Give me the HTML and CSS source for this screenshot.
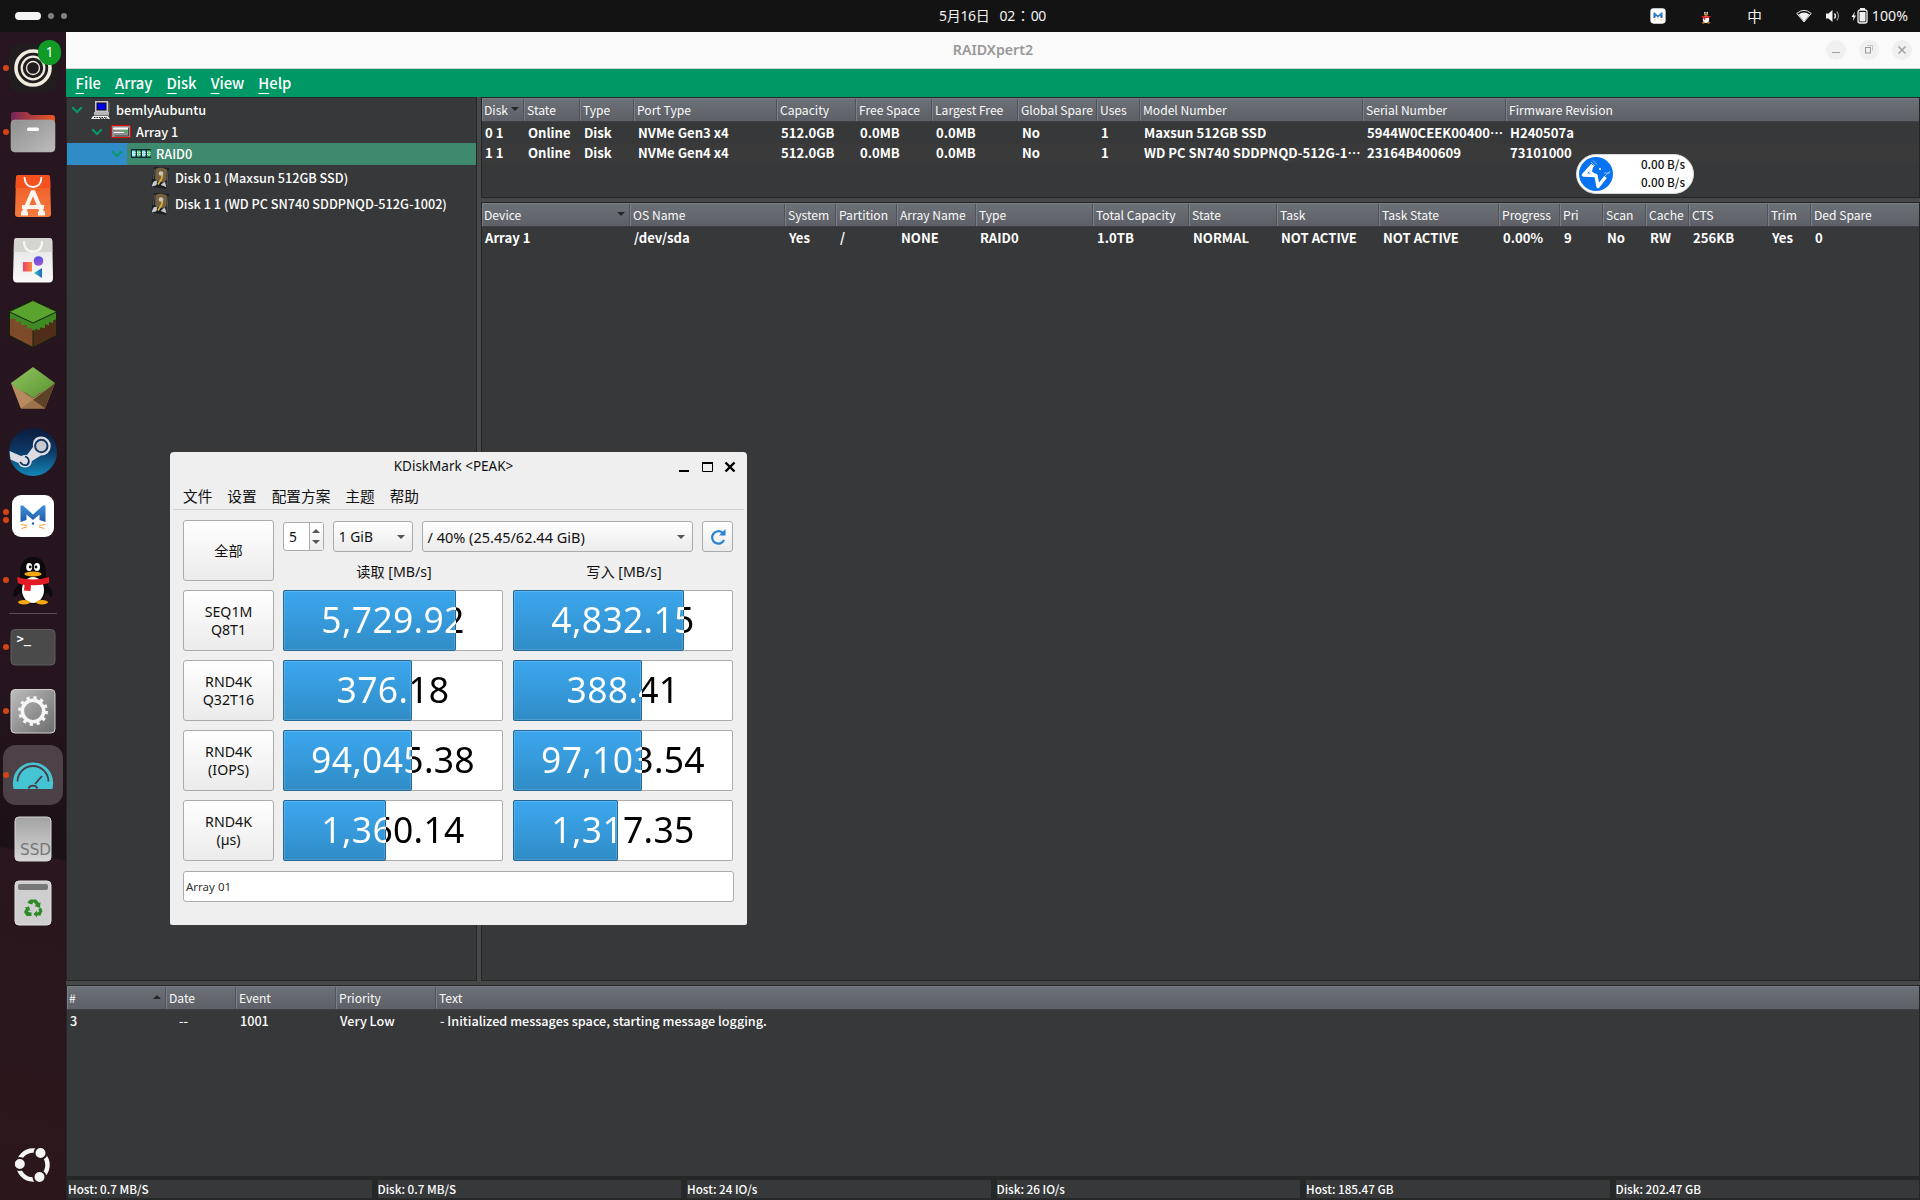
FILE: index.html
```html
<!DOCTYPE html>
<html lang="zh-CN">
<head>
<meta charset="utf-8">
<title>RAIDXpert2</title>
<link rel="stylesheet" href="styles.css">
</head>
<body>
<svg class="defs" width="0" height="0">
  <defs>
    <linearGradient id="silver" x1="0" y1="0" x2="0" y2="1"><stop offset="0" stop-color="#a3a3a3"/><stop offset="1" stop-color="#d6d6d6"/></linearGradient>
    <linearGradient id="silver2" x1="0" y1="0" x2="1" y2="1"><stop offset="0" stop-color="#8f8f8f"/><stop offset="1" stop-color="#bcbcbc"/></linearGradient>
    <linearGradient id="silver3" x1="0" y1="0" x2="1" y2="1"><stop offset="0" stop-color="#bdbdbd"/><stop offset="1" stop-color="#6c6c6c"/></linearGradient>
    <linearGradient id="folder" x1="0" y1="0" x2="1" y2="0"><stop offset="0" stop-color="#77255a"/><stop offset="1" stop-color="#ea5a20"/></linearGradient>
    <linearGradient id="steam" x1="0" y1="0" x2="0" y2="1"><stop offset="0" stop-color="#0c1a3c"/><stop offset=".5" stop-color="#0d3a68"/><stop offset="1" stop-color="#1387b8"/></linearGradient>
    <linearGradient id="bluem" x1="0" y1="0" x2="0" y2="1"><stop offset="0" stop-color="#3d8fd8"/><stop offset="1" stop-color="#1f5aa8"/></linearGradient>
    <linearGradient id="pinkor" x1="0" y1="0" x2="1" y2="0"><stop offset="0" stop-color="#ee3f6a"/><stop offset="1" stop-color="#f78a3e"/></linearGradient>
    <linearGradient id="purp" x1="0" y1="0" x2="0" y2="1"><stop offset="0" stop-color="#5550e0"/><stop offset="1" stop-color="#a255d0"/></linearGradient>
    <linearGradient id="teal" x1="0" y1="0" x2="1" y2="0"><stop offset="0" stop-color="#29c8b0"/><stop offset="1" stop-color="#2463c8"/></linearGradient>
    <linearGradient id="bagw" x1="0" y1="0" x2="0" y2="1"><stop offset="0" stop-color="#e2e2e2"/><stop offset="1" stop-color="#fafafa"/></linearGradient>
    <linearGradient id="bago" x1="0" y1="0" x2="0" y2="1"><stop offset="0" stop-color="#ee5a24"/><stop offset="1" stop-color="#f57a3f"/></linearGradient>
    <linearGradient id="grass" x1="0" y1="0" x2="1" y2="1"><stop offset="0" stop-color="#90c060"/><stop offset=".6" stop-color="#6fa843"/><stop offset="1" stop-color="#5c8a38"/></linearGradient>
    <symbol id="chev" viewBox="0 0 12 12"><path d="M1.2 3.2 6 8 10.8 3.2" fill="none" stroke="#079a68" stroke-width="2"/></symbol>
    <symbol id="hdd" viewBox="0 0 20 24">
      <path d="M4 1 19 2 18 17 16 23 1 20.500Z" fill="#1d2023"/>
      <path d="M5.500 3Q11 .5 17 3.500L16.500 14Q11 19 5 13Z" fill="#76603f"/>
      <path d="M4.500 3 3.500 13M18 4.500 17 19" stroke="#555a60"/>
      <circle cx="11" cy="7.500" r="2.300" fill="#c9c5bb"/>
      <path d="M12.500 9 11.500 13 8 18.500" fill="none" stroke="#d7b53d" stroke-width="1.700"/>
      <path d="M2 20 4 15.500 7 15 6 19ZM11 19 14.500 16 16 21" fill="#c5cbd1" stroke="#c5cbd1" stroke-width=".8"/>
    </symbol>
    <symbol id="qq" viewBox="0 0 42 50">
      <path d="M6 30Q0 36 2 42 4 42 7 38L35 38Q38 42 40 42 42 36 36 30L34 22Q35 2 21 2 7 2 8 22Z" fill="#0b0b0d"/>
      <ellipse cx="21" cy="35" rx="13" ry="14" fill="#0b0b0d"/>
      <ellipse cx="21" cy="35" rx="11" ry="13" fill="#fff"/>
      <ellipse cx="12" cy="47.200" rx="6" ry="2.200" fill="#f5a80f"/><ellipse cx="30" cy="47.200" rx="6" ry="2.200" fill="#f5a80f"/>
      <ellipse cx="17.200" cy="12" rx="3" ry="4" fill="#fff"/><ellipse cx="25" cy="12" rx="3" ry="4" fill="#fff"/>
      <circle cx="18.200" cy="12" r="1.400" fill="#111"/><circle cx="24" cy="12" r="1.400" fill="#111"/>
      <ellipse cx="21" cy="19" rx="8.600" ry="2.500" fill="#f5a80f"/>
      <path d="M5 22Q21 27 37 22L37 28Q27 31 19 30L18.500 36 12 35.500 12.500 30Q7 29 6 28Z" fill="#e21b24"/>
    </symbol>
    <symbol id="catm" viewBox="0 0 44 44">
      <rect x="1" y="1" width="42" height="42" rx="9" fill="#fff"/>
      <path d="M9.500 28V11.500L12 11.500 22 20.500 32 11.500 34.500 11.500V28L28.500 26V20.500L22 26 15.500 20.500V26Z" fill="url(#bluem)"/>
      <circle cx="22" cy="29.500" r="1.200" fill="#2a65ad"/>
      <path d="M10 30.500 16 31.500M10.500 34.500 16 33M34 30.500 28 31.500M33.500 34.500 28 33" stroke="#f0a63c" stroke-width="1.200"/>
    </symbol>
  </defs>
</svg>

<header class="topbar">
  <div class="workspaces"><i class="pill"></i><i class="dot"></i><i class="dot"></i></div>
  <div class="clock"><span>5月16日</span><span>02<b>：</b>00</span></div>
  <div class="tray">
    <svg class="t-cat" width="16" height="16"><use href="#catm"/></svg>
    <svg class="t-qq" width="12" height="15"><use href="#qq"/></svg>
    <span class="t-zh">中</span>
    <svg class="t-wifi" width="16" height="14" viewBox="0 0 16 14"><path d="M.8 4.500Q8-1.800 15.200 4.500L8 13Z" fill="none" stroke="#eee"/><path d="M2.500 5.500Q8 1.500 13.500 5.500L8 12.500Z" fill="#f2f2f2"/></svg>
    <svg class="t-vol" width="16" height="14" viewBox="0 0 16 14"><path d="M1 4.500H3.500L7.500 1V13L3.500 9.500H1Z" fill="#f2f2f2"/><path d="M9.500 4.500Q11.500 7 9.500 9.500" fill="none" stroke="#eee" stroke-width="1.300"/><path d="M11.800 2.500Q15.200 7 11.800 11.500" fill="none" stroke="#8a8a8a" stroke-width="1.300"/></svg>
    <svg class="t-bat" width="17" height="16" viewBox="0 0 17 16"><path d="M4 3.500 .5 9H2.500L2 13 5 7.500H3Z" fill="#f2f2f2"/><rect x="7" y="2" width="9" height="13" rx="2" fill="none" stroke="#f2f2f2" stroke-width="1.300"/><rect x="9" y="0" width="5" height="2" fill="#f2f2f2"/><rect x="8.500" y="4" width="6" height="9.500" fill="#f2f2f2"/></svg>
    <span class="pct">100%</span>
  </div>
</header>

<div class="desk">
  <nav class="dock">
    <div class="app run1"><svg width="48" height="48" viewBox="0 0 48 48"><rect width="48" height="48" rx="10" fill="#1f1d1d"/><g fill="none" stroke="#f1ecdf"><circle cx="24" cy="24" r="17" stroke-width="3.600"/><circle cx="24" cy="24" r="11.300" stroke-width="2.200"/><circle cx="24" cy="24" r="6.500" stroke-width="1.300"/></g></svg><span class="badge">1</span></div>
    <div class="app run1"><svg width="48" height="48" viewBox="0 0 48 48"><path d="M2 12V7Q2 4 5 4H18L22 7H43Q46 7 46 10V16H2Z" fill="url(#folder)"/><rect x="2" y="12" width="44" height="32" rx="4" fill="url(#silver2)" stroke="#aaa" stroke-width=".6"/><rect x="18" y="19.500" width="12" height="3.500" rx="1.500" fill="#fff"/></svg></div>
    <div class="app"><svg width="48" height="48" viewBox="0 0 48 48"><path d="M9 3H39Q41 3 41 5L42 42Q42 45 39 45H9Q6 45 6 42L7 5Q7 3 9 3Z" fill="url(#bago)"/><path d="M7 4.500 9 3H39L41 4.500 41.500 16H6.500Z" fill="#f4511e"/><path d="M15.500 5Q16 15 24 15T32.500 5" fill="none" stroke="#fff" stroke-width="1.800"/><path d="M14.500 41.500 24 19 33.500 41.500M19 41.500H12M36 41.500H29M13 35H35" fill="none" stroke="#fff4ee" stroke-width="4.200" stroke-linejoin="bevel"/></svg></div>
    <div class="app"><svg width="48" height="48" viewBox="0 0 48 48"><path d="M8 2H40Q43 2 43.300 5L44 42Q44 46.500 40 46.500H8Q4 46.500 4 42L5 5Q5 2 8 2Z" fill="url(#bagw)"/><path d="M5 5Q5 2 8 2H40Q43 2 43.300 5V16H4.800Z" fill="#d4d4d0"/><path d="M15 5Q15 15.500 24 15.500T33 5" fill="none" stroke="#f8f8f8" stroke-width="2"/><rect x="14" y="26" width="9" height="9.500" fill="url(#pinkor)"/><circle cx="29.500" cy="25" r="4.800" fill="url(#purp)"/><path d="M25 37 33 32V42Z" fill="url(#teal)"/></svg></div>
    <div class="app"><svg width="48" height="48" viewBox="0 0 48 48"><path d="M.5 12 24 24V47.500L.5 35.500Z" fill="#7d4a2a"/><path d="M47.500 12 24 24V47.500L47.500 35.500Z" fill="#4f2d18"/><path d="M.5 11.500 24 .5 47.500 11.500V19L44 20.500V23L40 22V25.500L36 24V28L31 27.500V30L26 29V30.500H23.500L22 28 18 28.500V25L12 25V21.500L7 22V19L.5 19Z" fill="#3f8a22"/><path d="M.5 11.500 24 .5 47.500 11.500 24 22.500Z" fill="#5ba32f"/><path d="M.5 11.500 24 .5 47.500 11.500V35.500L24 47.500 .5 35.500ZM.5 12 24 23 47.500 12M24 30V47.500" fill="none" stroke="#15240c" stroke-width="1"/></svg></div>
    <div class="app"><svg width="48" height="48" viewBox="0 0 48 48"><path d="M2 19 12 44.500H36L46 19 24 34Z" fill="#a77c52"/><path d="M2 19 24 36 12 44.500Z" fill="#b78a5f"/><path d="M24 36 36 44.500 46 19Z" fill="#5d4227"/><path d="M24 36 12 44.500H36Z" fill="#9b744b"/><path d="M24 3 46 19 37 26 31 29 24 34 17 29 8 25 2 19Z" fill="url(#grass)"/></svg></div>
    <div class="app"><svg width="48" height="48" viewBox="0 0 48 48"><circle cx="24" cy="24" r="24" fill="url(#steam)"/><path d="M.5 23 12 28Q15 26.500 18 27L24 19Q23 8.500 32.500 8.500A9.500 9.500 0 0 1 32 27.500L23 33Q22 39 16.500 39.500 11 39.500 9.500 35L1.500 31.500Z" fill="#dcdce2"/><circle cx="32.300" cy="18" r="6.200" fill="#c8c8d0" stroke="#12365f" stroke-width="2"/><path d="M11 34Q14 38 18 37A4.800 4.800 0 0 0 16 28.500" fill="none" stroke="#12365f" stroke-width="1.700"/></svg></div>
    <div class="app run2"><svg width="44" height="44"><use href="#catm"/></svg></div>
    <div class="app run1"><svg width="42" height="50"><use href="#qq"/></svg></div>
    <hr class="sep">
    <div class="app run1"><svg width="48" height="48" viewBox="0 0 48 48"><rect x="2" y="6.500" width="44" height="35.500" rx="4" fill="#4a4a4a" stroke="#5e5e5e"/><text x="7.500" y="20" font-family="DejaVu Sans Mono" font-weight="bold" font-size="12" fill="#fff">&gt;_</text></svg></div>
    <div class="app run1"><svg width="48" height="48" viewBox="0 0 48 48"><rect x="2" y="2.500" width="44" height="43.500" rx="4" fill="url(#silver3)" stroke="#d0d0d0" stroke-width="1"/><circle cx="24" cy="24" r="10.700" fill="none" stroke="#f5f5f3" stroke-width="3.600"/><circle cx="24" cy="24" r="13.200" fill="none" stroke="#f5f5f3" stroke-width="3.400" stroke-dasharray="3.200 3.712"/></svg></div>
    <div class="app run1 active"><svg width="48" height="48" viewBox="0 0 48 48"><path d="M4.500 38Q3 32 4.500 27A20 20 0 0 1 43.500 27Q45 32 43.500 38Z" fill="#45c5d3"/><path d="M8.500 30.500A15.500 15.500 0 0 1 39.500 30.500M33 25 26 33M19.500 37.500A5 5 0 0 1 28.500 37.500" fill="none" stroke="#4c3a44" stroke-width="1.800"/></svg></div>
    <div class="app"><svg width="48" height="48" viewBox="0 0 48 48"><rect x="6" y="2" width="36" height="44" rx="4" fill="url(#silver)" stroke="#d5d5d5"/><text x="11" y="40.300" font-family="DejaVu Sans" font-size="15.200" fill="#777">SSD</text></svg></div>
    <div class="app"><svg width="48" height="48" viewBox="0 0 48 48"><rect x="6" y="2" width="36" height="44" rx="4" fill="#cfcfcf" stroke="#e2e2e2"/><rect x="9" y="5" width="30" height="6" rx="2" fill="#777"/><g fill="#2d8a26"><path d="M19.500 22 21.500 20.500H27L30 24 31.500 23 31 29 25.500 27 27 26 24.500 23 23 25.500 18.500 24Z"/><path d="M32 28.500 33.500 32 31.500 36.500H28V38.500L24.500 35 28 31.500V33.500L30 33 29.500 30Z"/><path d="M22.500 33.500V37H17.500L15 33 17 29.500 15.500 28.500 20 27.500 21.500 32 20 31 19 33Z"/></g></svg></div>
    <div class="app launcher"><svg width="36" height="36" viewBox="0 0 36 36"><circle cx="18" cy="18" r="14.500" fill="none" stroke="#f6f6f6" stroke-width="4.500"/><g fill="#f4f4f4" stroke="#29171b" stroke-width="2"><circle cx="4.800" cy="17" r="6"/><circle cx="25.500" cy="6" r="6"/><circle cx="24.500" cy="30" r="6"/></g></svg></div>
  </nav>

  <main class="window">
    <div class="titlebar"><span class="title">RAIDXpert2</span>
      <div class="winbtns">
        <i><svg width="20" height="20"><path d="M6 12.500H14" stroke="#a2a2a2"/></svg></i>
        <i><svg width="20" height="20"><rect x="6.500" y="7.500" width="5" height="5.500" fill="none" stroke="#999"/><path d="M8.500 5.500H13.500V10.500" fill="none" stroke="#c4c4c4"/></svg></i>
        <i><svg width="20" height="20"><path d="M6.500 6.500 13.500 13.500M13.500 6.500 6.500 13.500" stroke="#a2a2a2" stroke-width="1.500"/></svg></i>
      </div>
    </div>
    <div class="menubar"><span><u>F</u>ile</span><span><u>A</u>rray</span><span><u>D</u>isk</span><span><u>V</u>iew</span><span><u>H</u>elp</span></div>

    <div class="upper">
      <div class="panel tree">
        <div class="node l0"><svg class="chev" width="12" height="12"><use href="#chev"/></svg>
          <svg width="20" height="20" viewBox="0 0 20 20"><path d="M4 1H17V12H4Z" fill="#c8c8c8"/><path d="M17 1 18.500 3V14L17 12Z" fill="#666"/><rect x="6" y="3" width="9" height="7" fill="#0000e8" stroke="#111"/><path d="M3 12H18V15.500H3Z" fill="#b5b5b5"/><path d="M2 16H17L19 19H0Z" fill="#eee"/><path d="M3 17.500H16M9 18.800H17" stroke="#222" stroke-dasharray="1.500 1"/></svg>
          <span>bemlyAubuntu</span></div>
        <div class="node l1"><svg class="chev" width="12" height="12"><use href="#chev"/></svg>
          <svg width="20" height="20" viewBox="0 0 20 20"><rect x=".5" y="3.500" width="19" height="12" rx="1" fill="#8f8f8f" stroke="#f00000"/><path d="M2.500 6H17V7H2.500ZM2.500 10.500H13" fill="#fff" stroke="#fff"/><path d="M12 9H15.500V10.500" stroke="#00d820" fill="none"/><path d="M17.500 6V14H4" stroke="#444" fill="none"/></svg>
          <span>Array 1</span></div>
        <div class="node l2 selected"><svg class="chev" width="12" height="12"><use href="#chev"/></svg>
          <svg width="20" height="20" viewBox="0 0 20 20"><rect y="5" width="20" height="9" fill="#122c30"/><path d="M1 6.500H4.500V12.500H1ZM11 6.500H14.500V12.500H11Z" fill="#8fe8ee"/><path d="M6 6.500H9.500V12.500H6ZM16 6.500H19.500V12.500H16Z" fill="#5fd88a"/><path d="M1 8.500H20M1 10.500H20" stroke="#fff" stroke-dasharray="1 1.500"/></svg>
          <span>RAID0</span></div>
        <div class="node disk"><svg width="20" height="24"><use href="#hdd"/></svg><span>Disk 0 1 (Maxsun 512GB SSD)</span></div>
        <div class="node disk"><svg width="20" height="24"><use href="#hdd"/></svg><span>Disk 1 1 (WD PC SN740 SDDPNQD-512G-1002)</span></div>
      </div>

      <div class="right">
        <div class="panel disks">
          <div class="row head"><span class="sort down">Disk</span><span>State</span><span>Type</span><span>Port Type</span><span>Capacity</span><span>Free Space</span><span>Largest Free</span><span>Global Spare</span><span>Uses</span><span>Model Number</span><span>Serial Number</span><span>Firmware Revision</span></div>
          <div class="row"><span>0 1</span><span>Online</span><span>Disk</span><span>NVMe Gen3 x4</span><span>512.0GB</span><span>0.0MB</span><span>0.0MB</span><span>No</span><span>1</span><span>Maxsun 512GB SSD</span><span>5944W0CEEK00400…</span><span>H240507a</span></div>
          <div class="row alt"><span>1 1</span><span>Online</span><span>Disk</span><span>NVMe Gen4 x4</span><span>512.0GB</span><span>0.0MB</span><span>0.0MB</span><span>No</span><span>1</span><span>WD PC SN740 SDDPNQD-512G-1…</span><span>23164B400609</span><span>73101000</span></div>
        </div>
        <div class="panel arrays">
          <div class="row head"><span class="sort down">Device</span><span>OS Name</span><span>System</span><span>Partition</span><span>Array Name</span><span>Type</span><span>Total Capacity</span><span>State</span><span>Task</span><span>Task State</span><span>Progress</span><span>Pri</span><span>Scan</span><span>Cache</span><span>CTS</span><span>Trim</span><span>Ded Spare</span></div>
          <div class="row"><span>Array 1</span><span>/dev/sda</span><span>Yes</span><span>/</span><span>NONE</span><span>RAID0</span><span>1.0TB</span><span>NORMAL</span><span>NOT ACTIVE</span><span>NOT ACTIVE</span><span>0.00%</span><span>9</span><span>No</span><span>RW</span><span>256KB</span><span>Yes</span><span>0</span></div>
        </div>
      </div>
    </div>

    <div class="panel events">
      <div class="row head"><span class="sort up">#</span><span>Date</span><span>Event</span><span>Priority</span><span>Text</span></div>
      <div class="row"><span>3</span><span class="nodate">--</span><span>1001</span><span>Very Low</span><span>- Initialized messages space, starting message logging.</span></div>
    </div>
    <footer class="status"><span>Host: 0.7 MB/S</span><span>Disk: 0.7 MB/S</span><span>Host: 24 IO/s</span><span>Disk: 26 IO/s</span><span>Host: 185.47 GB</span><span>Disk: 202.47 GB</span></footer>
  </main>
</div>

<section class="kdm">
  <div class="k-title"><span>KDiskMark &lt;PEAK&gt;</span>
    <svg width="60" height="14" viewBox="0 0 60 14"><path d="M1 11H11" stroke="#000" stroke-width="2"/><path d="M24.500 3V11.500H34.500V3" fill="none" stroke="#000"/><path d="M24 3H35" stroke="#000" stroke-width="2"/><path d="M47.500 2.500 56.500 11.500M56.500 2.500 47.500 11.500" stroke="#000" stroke-width="2.400"/></svg>
  </div>
  <div class="k-menu"><span>文件</span><span>设置</span><span>配置方案</span><span>主题</span><span>帮助</span></div>
  <div class="k-body">
    <button class="k-btn k-all">全部</button>
    <div class="k-top">
      <div class="k-controls">
        <div class="spin"><span>5</span><div class="arrows"><i class="tri up"></i><i class="tri"></i></div></div>
        <div class="combo size"><span>1 GiB</span><i class="tri"></i></div>
        <div class="combo drive"><span>/ 40% (25.45/62.44 GiB)</span><i class="tri"></i></div>
        <div class="combo refresh"><svg width="16" height="18" viewBox="0 0 16 18"><path d="M12.500 4.800A6.200 6.200 0 1 0 14 12" fill="none" stroke="#2a82d0" stroke-width="2.200"/><path d="M15.500 1V7.500H9Z" fill="#2a82d0"/></svg></div>
      </div>
      <div class="k-labels"><span>读取 [MB/s]</span><span>写入 [MB/s]</span></div>
    </div>
    <button class="k-btn">SEQ1M<br>Q8T1</button><div class="bar" style="--w:173px"><b>5,729.92</b></div><div class="bar" style="--w:171px"><b>4,832.15</b></div>
    <button class="k-btn">RND4K<br>Q32T16</button><div class="bar" style="--w:129px"><b>376.18</b></div><div class="bar" style="--w:129px"><b>388.41</b></div>
    <button class="k-btn">RND4K<br>(IOPS)</button><div class="bar" style="--w:129px"><b>94,045.38</b></div><div class="bar" style="--w:129px"><b>97,103.54</b></div>
    <button class="k-btn">RND4K<br>(µs)</button><div class="bar" style="--w:103px"><b>1,360.14</b></div><div class="bar" style="--w:105px"><b>1,317.35</b></div>
  </div>
  <div class="k-input">Array 01</div>
</section>

<aside class="speed">
  <svg width="34" height="34" viewBox="0 0 34 34"><circle cx="17" cy="17" r="17" fill="#0873f0"/><path d="M13.500 8 4.500 18 17 18.500 19 29.500 26.500 20" fill="none" stroke="#fff" stroke-width="3.400" stroke-linejoin="round"/><path d="M13.500 8 11.500 15 16 18" fill="none" stroke="#fff" stroke-width="2.500"/><circle cx="21" cy="12" r="1" fill="#fff"/><path d="M12 5 16 9M14 3.500 18 7.500M25 16H31M26 19 31 14" stroke="#8fc2ff" stroke-width="1"/></svg>
  <div><span>0.00 B/s</span><span>0.00 B/s</span></div>
</aside>
</body>
</html>
```
FILE: styles.css
```css
*, *::before, *::after { box-sizing: border-box; }
body {
  margin: 0; width: 1920px; height: 1200px; overflow: hidden; position: relative;
  background: #131313; color: #fff;
  display: flex; flex-direction: column;
  font: 13.33px/20px "Noto Sans CJK SC", sans-serif;
}
.defs { position: absolute; }
svg { display: block; flex: none; }
i { font-style: normal; }

/* top bar */
.topbar { height: 32px; flex: none; display: grid; grid-template-columns: 1fr auto 1fr; align-items: center; font: 14.67px/32px "Noto Sans", "Noto Sans CJK SC", sans-serif; color: #f2f2f2; }
.workspaces { display: flex; align-items: center; gap: 7px; padding-left: 15px; }
.pill { width: 26px; height: 8px; border-radius: 4px; background: #f4f4f4; }
.dot { width: 6px; height: 6px; border-radius: 3px; background: #828282; }
.clock { display: flex; gap: 10px; width: 108px; height: 32px; line-height: 31px; margin-left: 66px; white-space: nowrap; font-size: 14px; letter-spacing: -.3px; }
.clock b { font-weight: 400; font-family: "Noto Sans CJK TC"; line-height: 1; margin: 0 1px; }
.tray { display: flex; align-items: center; padding-right: 12px; justify-content: flex-end; line-height: 30px; }
.t-cat { margin-right: 34px; }
.t-qq { margin-right: 35px; }
.t-zh { font-size: 14.67px; margin-right: 34px; }
.t-wifi { margin-right: 13px; }
.t-vol { margin-right: 10px; }
.t-bat { margin-right: 4px; }
.pct { font-size: 14.2px; }

.desk { flex: 1; display: flex; min-height: 0; }

/* dock */
.dock {
  width: 66px; flex: none; display: flex; flex-direction: column; align-items: center; padding: 4px 0 3px;
  background: linear-gradient(192deg, transparent 70%, #29161e 70.200%, #2b171b 100%), linear-gradient(#271520, #26151f 55%, #1a1014 72%, #191015 80%, #2b171b);
}
.app { position: relative; width: 66px; height: 64px; flex: none; display: grid; place-items: center; }
.run1::before, .run2::before, .run2::after { content: ""; position: absolute; left: 3px; top: 29px; width: 6px; height: 6px; border-radius: 50%; background: #d14415; }
.run2::before { top: 25px; }
.run2::after { top: 33px; }
.badge { position: absolute; left: 38px; top: 4px; width: 23px; height: 25px; border-radius: 12px; background: #119a26; text-align: center; font: 13.5px/25px "Noto Sans", sans-serif; }
.sep { width: 48px; height: 1px; border: 0; margin: 1px 0; background: #5a4c54; flex: none; }
.active svg { position: relative; }
.active::after { content: ""; position: absolute; inset: 2px 3px; border-radius: 13px; background: rgba(255,255,255,.2); z-index: 0; }
.active svg, .active.run1::before { z-index: 1; }
.launcher { margin-top: auto; }

/* main window */
.window { flex: 1; min-width: 0; display: flex; flex-direction: column; background: #464947; }
.titlebar { height: 37px; flex: none; background: #fafafa; border-bottom: 1px solid #d3d3d3; display: grid; align-items: center; position: relative; }
.title { text-align: center; color: #989898; font: 600 14.200px/20px "Noto Sans", sans-serif; }
.winbtns { position: absolute; right: 8px; top: 8px; display: flex; gap: 13px; }
.winbtns i { width: 20px; height: 20px; border-radius: 10px; background: #f0f0f0; }
.menubar { height: 28px; flex: none; background: #009966; display: flex; gap: 14px; padding: 0 9.500px; font-size: 14.800px; line-height: 27px; font-weight: 500; }
.menubar u { text-underline-offset: 4px; text-decoration-thickness: 1px; text-decoration-skip-ink: none; }
.upper { height: 884px; flex: none; display: flex; gap: 4px; }
.panel { background: #373839; border: 1px solid #242526; }
.tree { width: 411px; font-weight: 500; font-size: 12.700px; padding-top: 1px; }
.node { height: 22px; line-height: 22px; display: flex; align-items: center; }
.node svg { margin-right: 5px; }
.node .chev { margin-right: 8px; }
.l0 { padding-left: 4px; }
.l1 { padding-left: 24px; }
.l2 { padding-left: 44px; }
.selected { background: linear-gradient(90deg, #308cc6 60px, #3f8a6f 60px); }
.disk { height: 26px; padding-left: 83px; line-height: 26px; }
.right { flex: 1; min-width: 0; display: flex; flex-direction: column; gap: 4px; }
.disks { height: 101px; }
.arrays { flex: 1; }
.events { height: 192px; flex: none; margin-top: 4px; }

.row { display: grid; height: 20px; line-height: 20px; font-weight: 700; font-size: 13.100px; }
.row span { padding-left: 4px; white-space: nowrap; overflow: hidden; }
.row span:first-child { padding-left: 3px; }
.disks .row { grid-template-columns: 42px 56px 54px 143px 79px 76px 86px 79px 43px 223px 143px 1fr; }
.arrays .row { grid-template-columns: 148px 155px 51px 61px 79px 117px 96px 88px 102px 120px 61px 43px 43px 43px 79px 43px 1fr; }
.events .row { grid-template-columns: 99px 70px 100px 100px 1fr; font-weight: 500; font-size: 12.650px; }
.events .row span { padding-left: 4px; }
.events .row span:first-child { padding-left: 3px; }
.row.head.head { height: 24px; line-height: 22px; font-weight: 400; font-size: 12.100px; background: linear-gradient(#6c7077, #5d6066); border-top: 1px solid #797c81; border-bottom: 1px solid #3d3f43; margin-bottom: 1px; color: #fafafa; }
.row.head span { padding-left: 3px; border-right: 1px solid #505257; box-shadow: inset 1px 0 #7b7e84; position: relative; height: 22px; }
.row.head span:first-child { padding-left: 2px; }
.row.head span:last-child { border-right: 0; }
.sort::after { content: ""; position: absolute; right: 4px; top: 8px; border: 4px solid transparent; border-bottom: 0; border-top: 4px solid #25272a; }
.sort.up::after { border-top: 0; border-bottom: 4px solid #25272a; }
.alt { background: #3a3a3b; }
.events .row .nodate { padding-left: 13px; }

.status { flex: 1; background: #262727; display: grid; grid-template-columns: repeat(6, 1fr); gap: 6px; padding: 3px 1px 2px 2px; font-weight: 500; font-size: 11.700px; line-height: 18px; }
.status span { background: #373839; white-space: nowrap; }

/* disk benchmark window */
.kdm { position: absolute; left: 170px; top: 452px; width: 577px; height: 473px; border-radius: 4px 4px 2px 2px; background: #efefef; color: #111; font: 14.200px/18px "Noto Sans", "Noto Sans CJK SC", sans-serif; display: flex; flex-direction: column; padding: 0 13px; }
.k-title { height: 31px; display: grid; grid-template: 1fr / 1fr; align-items: center; text-align: center; position: relative; font-size: 13.500px; padding: 0 10px 4px 0; }
.k-title svg { position: absolute; right: -4px; top: 8px; }
.k-menu { height: 27px; border-bottom: 1px solid #d2d2d2; margin: 0 -10px; padding: 0 10px; display: flex; gap: 15px; line-height: 26px; font-size: 14.67px; }
.k-body { display: grid; grid-template-columns: 90px 220px 220px; grid-auto-rows: 61px; gap: 9px 10px; padding-top: 10px; }
.k-btn { font: inherit; color: #111; margin: 0 -1px 0 0; padding: 0; border: 1px solid #ababab; border-radius: 3px; background: linear-gradient(#fff, #ebebeb); }
.k-top { grid-column: 2 / 4; display: flex; flex-direction: column; }
.k-controls { display: flex; height: 33px; align-items: center; gap: 9px; font-size: 13.8px; }
.spin, .combo { border: 1px solid #ababab; border-radius: 3px; background: #fff; display: flex; align-items: center; justify-content: space-between; }
.spin { width: 41px; height: 29px; padding-left: 5px; }
.arrows { width: 14px; height: 27px; border-left: 1px solid #ababab; background: linear-gradient(#fff, #ececec); display: flex; flex-direction: column; align-items: center; justify-content: space-evenly; }
.combo { height: 31px; background: linear-gradient(#fff, #ebebeb); padding: 0 7px 0 5px; }
.tri { border: 4px solid transparent; border-top-color: #555; border-bottom: 0; }
.tri.up { border-bottom: 4px solid #555; border-top: 0; }
.size { width: 81px; }
.drive { width: 272px; font-size: 14.500px; padding-left: 4px; }
.refresh { width: 31px; padding: 0; justify-content: center; }
.k-labels { display: grid; grid-template-columns: 220px 220px; gap: 10px; text-align: center; padding: 10px 0 0 1px; }
.bar { position: relative; border: 1px solid #ababab; border-radius: 2px; background: #fff; }
.bar::before { content: ""; position: absolute; left: -1px; top: -1px; bottom: -1px; width: var(--w); border: 1px solid #226795; border-radius: 2px; background: linear-gradient(#3ca7ee, #308cc6); box-shadow: inset 0 0 0 1px rgba(255,255,255,.15); }
.bar b { position: relative; display: block; font-weight: 400; font-size: 35.500px; letter-spacing: .3px; line-height: 57px; height: 59px; text-align: center; color: transparent; background: linear-gradient(90deg, #fff calc(var(--w) - 1px), #000 calc(var(--w) - 1px)); -webkit-background-clip: text; background-clip: text; }
.k-input { margin-top: 10px; height: 31px; border: 1px solid #ababab; border-radius: 3px; background: #fff; padding-left: 2px; font-size: 11.5px; line-height: 30px; color: #333; }

/* floating network meter */
.speed { position: absolute; left: 1576px; top: 154px; width: 118px; height: 40px; border-radius: 20px; border: 1px solid #d8d8d8; background: #fff; color: #111; display: flex; align-items: center; justify-content: space-between; padding: 0 8px 2px 2px; font-weight: 500; font-size: 11.700px; }
.speed svg { margin-top: 2px; }
.speed div { display: flex; flex-direction: column; line-height: 18px; }
```
